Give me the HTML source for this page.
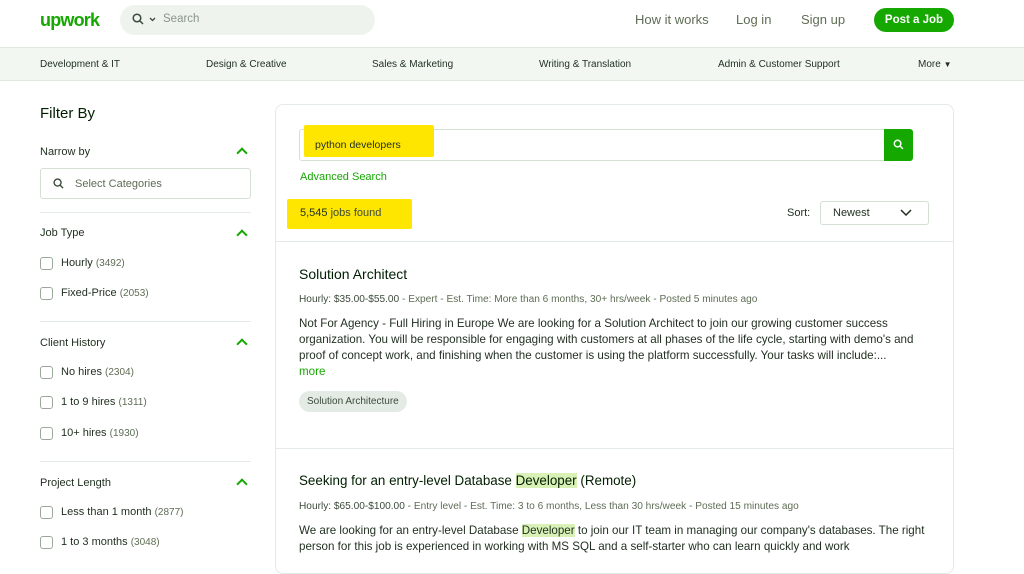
<!DOCTYPE html>
<html><head><meta charset="utf-8"><style>
*{margin:0;padding:0;box-sizing:border-box}
body{width:1024px;height:557px;overflow:hidden;background:#fff;font-family:"Liberation Sans",Arial,sans-serif;color:#001e00;position:relative}
.a{position:absolute;white-space:nowrap}
.nav{font-size:10px;color:#1f2e1f;top:59px}
.sep{position:absolute;height:1px;background:#e4ebe4}
.cb{position:absolute;left:40px;width:13px;height:13px;border:1px solid #9aa89a;border-radius:3px}
.lbl{font-size:11px;color:#1f2e1f;left:61px}
.lbl span{color:#5e6d55;font-size:10px}
.h{font-size:11px;color:#1f2e1f;left:40px}
.chev{position:absolute;left:238px;width:8px;height:8px;border-left:2px solid #14a800;border-top:2px solid #14a800;transform:rotate(45deg)}
.meta{font-size:10.15px;color:#5e6d55}
.meta b{font-weight:normal;color:#3b4a3b}
.p{font-size:11.6px;color:#1f2e1f;line-height:16px}
.hl{background:#d9f0b6}
</style></head><body>
<div class="a" style="left:40px;top:10px;font-size:18px;font-weight:bold;color:#14a800;letter-spacing:-0.8px">upwork</div>
<div class="a" style="left:120px;top:5px;width:255px;height:30px;border-radius:15px;background:#eef3ee"></div>
<svg class="a" style="left:132px;top:13px" width="12" height="12" viewBox="0 0 12 12"><circle cx="5" cy="5" r="3.8" fill="none" stroke="#3b4a3b" stroke-width="1.5"/><path d="M8 8l3 3" stroke="#3b4a3b" stroke-width="1.5"/></svg>
<svg class="a" style="left:149px;top:17px" width="7" height="5" viewBox="0 0 7 5"><path d="M1 1l2.5 2.5L6 1" stroke="#3b4a3b" stroke-width="1.3" fill="none"/></svg>
<div class="a" style="left:163px;top:13px;font-size:11.5px;color:#8a968a">Search</div>
<div class="a" style="left:635px;top:12px;font-size:13px;color:#5e6d55">How it works</div>
<div class="a" style="left:736px;top:12px;font-size:13px;color:#5e6d55">Log in</div>
<div class="a" style="left:801px;top:12px;font-size:13px;color:#5e6d55">Sign up</div>
<div class="a" style="left:874px;top:8px;width:80px;height:24px;border-radius:12px;background:#14a800;color:#fff;font-size:11.5px;font-weight:bold;text-align:center;line-height:24px">Post a Job</div>
<div class="a" style="left:0;top:47px;width:1024px;height:34px;background:#f2f7f2;border-top:1px solid #e0e8e0;border-bottom:1px solid #e0e8e0"></div>
<div class="a nav" style="left:40px">Development &amp; IT</div>
<div class="a nav" style="left:206px">Design &amp; Creative</div>
<div class="a nav" style="left:372px">Sales &amp; Marketing</div>
<div class="a nav" style="left:539px">Writing &amp; Translation</div>
<div class="a nav" style="left:718px">Admin &amp; Customer Support</div>
<div class="a nav" style="left:918px">More <span style="font-size:8px">&#9660;</span></div>

<div class="a" style="left:40px;top:105px;font-size:15px;color:#001e00">Filter By</div>
<div class="a h" style="top:146px">Narrow by</div><div class="chev" style="top:149px"></div>
<div class="a" style="left:40px;top:168px;width:211px;height:31px;border:1px solid #d5e0d5;border-radius:3px"></div>
<svg class="a" style="left:53px;top:178px" width="11" height="11" viewBox="0 0 12 12"><circle cx="5" cy="5" r="3.8" fill="none" stroke="#3b4a3b" stroke-width="1.5"/><path d="M8 8l3 3" stroke="#3b4a3b" stroke-width="1.5"/></svg>
<div class="a" style="left:75px;top:178px;font-size:11px;color:#5e6d55">Select Categories</div>
<div class="sep" style="left:40px;top:212px;width:211px"></div>
<div class="a h" style="top:227px">Job Type</div><div class="chev" style="top:231px"></div>
<div class="cb" style="top:257px"></div><div class="a lbl" style="top:257px">Hourly <span>(3492)</span></div>
<div class="cb" style="top:287px"></div><div class="a lbl" style="top:287px">Fixed-Price <span>(2053)</span></div>
<div class="sep" style="left:40px;top:321px;width:211px"></div>
<div class="a h" style="top:337px">Client History</div><div class="chev" style="top:340px"></div>
<div class="cb" style="top:366px"></div><div class="a lbl" style="top:366px">No hires <span>(2304)</span></div>
<div class="cb" style="top:396px"></div><div class="a lbl" style="top:396px">1 to 9 hires <span>(1311)</span></div>
<div class="cb" style="top:427px"></div><div class="a lbl" style="top:427px">10+ hires <span>(1930)</span></div>
<div class="sep" style="left:40px;top:461px;width:211px"></div>
<div class="a h" style="top:477px">Project Length</div><div class="chev" style="top:480px"></div>
<div class="cb" style="top:506px"></div><div class="a lbl" style="top:506px">Less than 1 month <span>(2877)</span></div>
<div class="cb" style="top:536px"></div><div class="a lbl" style="top:536px">1 to 3 months <span>(3048)</span></div>

<div class="a" style="left:275px;top:104px;width:679px;height:470px;border:1px solid #e4ebe4;border-radius:8px"></div>
<div class="a" style="left:299px;top:129px;width:586px;height:32px;border:1px solid #d5e0d5;border-radius:3px 0 0 3px"></div>
<div class="a" style="left:304px;top:125px;width:130px;height:32px;background:#ffe600;border-radius:2px"></div>
<div class="a" style="left:315px;top:139px;font-size:10.5px;color:#1f2e1f">python developers</div>
<div class="a" style="left:884px;top:129px;width:29px;height:32px;background:#14a800;border-radius:0 3px 3px 0"></div>
<svg class="a" style="left:893px;top:139px" width="11" height="11" viewBox="0 0 12 12"><circle cx="5" cy="5" r="3.6" fill="none" stroke="#fff" stroke-width="1.6"/><path d="M7.8 7.8l3 3" stroke="#fff" stroke-width="1.6"/></svg>
<div class="a" style="left:300px;top:171px;font-size:11px;color:#14a800">Advanced Search</div>
<div class="a" style="left:287px;top:199px;width:125px;height:30px;background:#ffe600;border-radius:2px"></div>
<div class="a" style="left:300px;top:207px;font-size:11px;color:#1f2e1f">5,545 <span style="color:#3b4a3b">jobs found</span></div>
<div class="a" style="left:787px;top:207px;font-size:11px;color:#1f2e1f">Sort:</div>
<div class="a" style="left:820px;top:201px;width:109px;height:24px;border:1px solid #d5e0d5;border-radius:3px"></div>
<div class="a" style="left:833px;top:207px;font-size:11px;color:#1f2e1f">Newest</div>
<svg class="a" style="left:900px;top:209px" width="12" height="7" viewBox="0 0 12 7"><path d="M1 1l5 5 5-5" stroke="#1f2e1f" stroke-width="1.5" fill="none"/></svg>
<div class="sep" style="left:276px;top:241px;width:677px"></div>

<div class="a" style="left:299px;top:266px;font-size:14px;color:#001e00">Solution Architect</div>
<div class="a meta" style="left:299px;top:294px"><b>Hourly: $35.00-$55.00</b> - Expert - Est. Time: More than 6 months, 30+ hrs/week - Posted 5 minutes ago</div>
<div class="a p" style="left:299px;top:316px">Not For Agency - Full Hiring in Europe We are looking for a Solution Architect to join our growing customer success<br>organization. You will be responsible for engaging with customers at all phases of the life cycle, starting with demo's and<br>proof of concept work, and finishing when the customer is using the platform successfully. Your tasks will include:...<br><span style="color:#14a800">more</span></div>
<div class="a" style="left:299px;top:391px;height:21px;padding:0 8px;border-radius:11px;background:#e4ebe4;font-size:10px;color:#3b4a3b;line-height:21px">Solution Architecture</div>
<div class="sep" style="left:276px;top:448px;width:677px"></div>

<div class="a" style="left:299px;top:473px;font-size:13.4px;color:#001e00">Seeking for an entry-level Database <span class="hl">Developer</span> (Remote)</div>
<div class="a meta" style="left:299px;top:501px"><b>Hourly: $65.00-$100.00</b> - Entry level - Est. Time: 3 to 6 months, Less than 30 hrs/week - Posted 15 minutes ago</div>
<div class="a p" style="left:299px;top:523px">We are looking for an entry-level Database <span class="hl">Developer</span> to join our IT team in managing our company's databases. The right<br>person for this job is experienced in working with MS SQL and a self-starter who can learn quickly and work</div>
</body></html>
